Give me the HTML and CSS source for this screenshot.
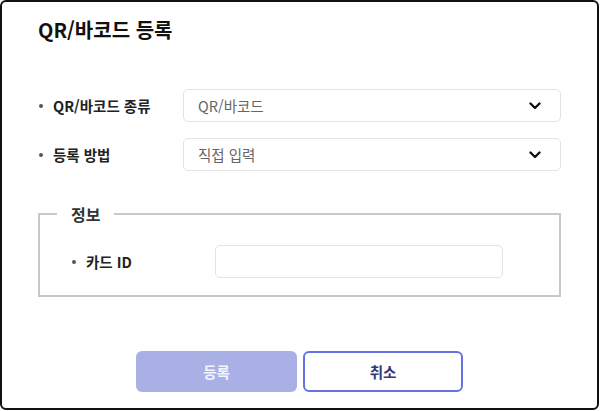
FILE: index.html
```html
<!DOCTYPE html>
<html lang="ko">
<head>
<meta charset="utf-8">
<title>QR/바코드 등록</title>
<link rel="stylesheet" href="styles.css">
</head>
<body>
<div class="dialog">
  <h1 class="title">QR/바코드 등록</h1>
  <div class="rows">
    <div class="row">
      <div class="label">QR/바코드 종류</div>
      <div class="select">
        <span>QR/바코드</span>
        <svg class="chev" width="12" height="8" viewBox="0 0 12 8"><path d="M1.5 1.5 L6 6 L10.5 1.5" fill="none" stroke="#111" stroke-width="2.4" stroke-linecap="round" stroke-linejoin="round"/></svg>
      </div>
    </div>
    <div class="row">
      <div class="label">등록 방법</div>
      <div class="select">
        <span>직접 입력</span>
        <svg class="chev" width="12" height="8" viewBox="0 0 12 8"><path d="M1.5 1.5 L6 6 L10.5 1.5" fill="none" stroke="#111" stroke-width="2.4" stroke-linecap="round" stroke-linejoin="round"/></svg>
      </div>
    </div>
  </div>
  <fieldset class="info">
    <legend class="legend">정보</legend>
    <div class="row">
      <div class="label label-inner">카드 ID</div>
      <div class="input"></div>
    </div>
  </fieldset>
  <div class="actions">
    <button class="btn btn-primary">등록</button>
    <button class="btn btn-outline">취소</button>
  </div>
</div>
</body>
</html>
```
FILE: styles.css
```css
html, body {
  margin: 0;
  padding: 0;
  background: #fff;
}
body {
  font-family: "Noto Sans CJK KR", "Noto Sans", sans-serif;
  color: #222;
}
.dialog {
  box-sizing: border-box;
  width: 599px;
  height: 410px;
  border: 2px solid #111;
  border-radius: 6px;
  padding: 0 36px;
  display: flex;
  flex-direction: column;
  background: #fff;
}
.title {
  margin: 16px 0 0 0;
  font-size: 20px;
  line-height: 24px;
  font-weight: 700;
  color: #111;
}
.rows {
  margin-top: 47px;
  display: flex;
  flex-direction: column;
  gap: 16px;
}
.row {
  display: flex;
  align-items: center;
}
.label {
  width: 145px;
  flex: none;
  display: flex;
  align-items: center;
  font-size: 14.5px;
  font-weight: 700;
  color: #222;
  box-sizing: border-box;
  padding-left: 1px;
}
.label::before {
  content: "";
  width: 4px;
  height: 4px;
  border-radius: 50%;
  background: #555;
  margin-right: 10px;
}
.select {
  flex: 1;
  box-sizing: border-box;
  height: 33px;
  border: 1px solid #e3e3e3;
  border-radius: 5px;
  display: flex;
  align-items: center;
  justify-content: space-between;
  padding: 0 19px 0 14px;
  font-size: 14.5px;
  color: #666;
}
.chev {
  display: block;
}
.info {
  margin: 33px 0 0 0;
  border: 2px solid #c8c8c8;
  padding: 21px 0 17px 32px;
  min-width: 0;
}
.legend {
  margin-left: -15px;
  padding: 0 14px;
  font-size: 16px;
  line-height: 20px;
  font-weight: 700;
  color: #333;
}
.label-inner {
  width: 143px;
  padding-left: 0;
}
.input {
  width: 288px;
  height: 33px;
  box-sizing: border-box;
  border: 1px solid #e3e3e3;
  border-radius: 5px;
}
.actions {
  margin-top: 54px;
  display: flex;
  justify-content: center;
  gap: 6px;
}
.btn {
  box-sizing: border-box;
  height: 41px;
  border-radius: 6px;
  font-family: inherit;
  font-size: 14.5px;
  font-weight: 700;
  cursor: pointer;
}
.btn-primary {
  width: 161px;
  background: #a9b0e6;
  border: none;
  color: #f4f5ff;
}
.btn-outline {
  width: 160px;
  background: #fff;
  border: 2px solid #6374e2;
  color: #34377a;
}
```
